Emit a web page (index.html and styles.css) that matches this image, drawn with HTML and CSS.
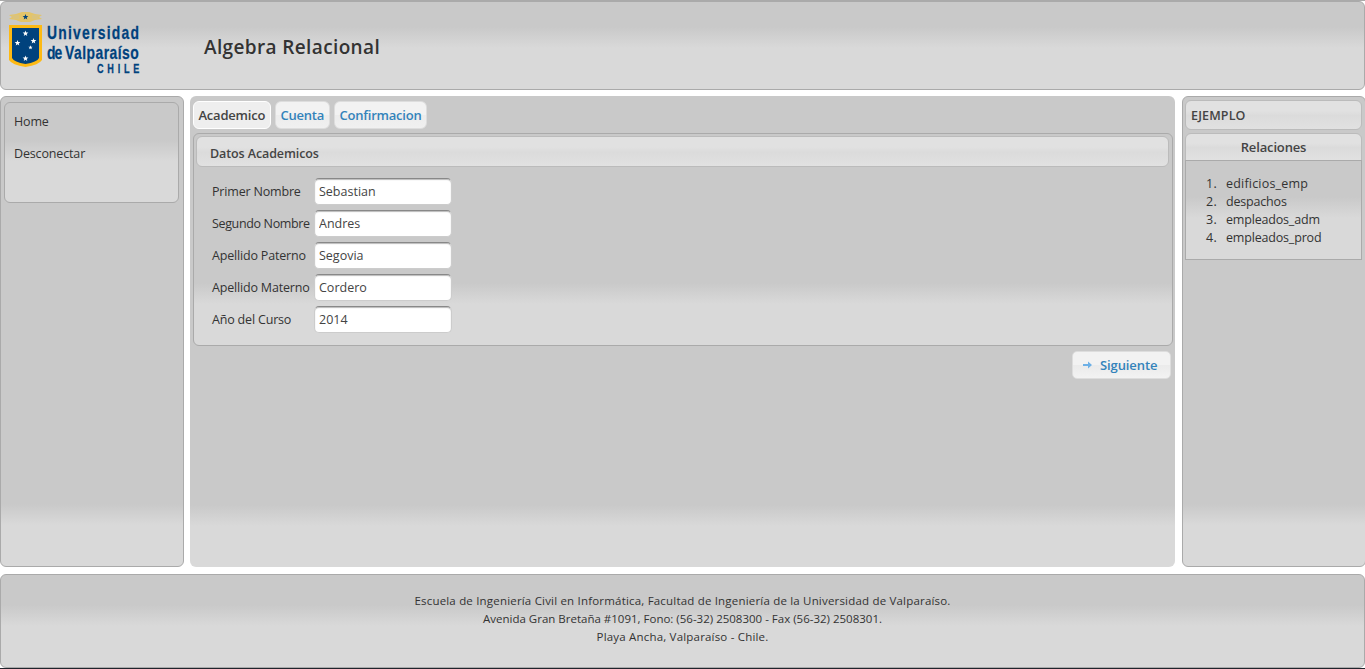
FILE: index.html
```html
<!DOCTYPE html>
<html lang="es">
<head>
<meta charset="utf-8">
<title>Algebra Relacional</title>
<link rel="stylesheet" href="styles.css">
</head>
<body>
<header class="panel header">
  <svg class="logo" width="136" height="66" viewBox="0 0 136 66" role="img" aria-label="Universidad de Valparaíso, Chile">
    <defs><path id="star" d="M0-3 .75-1 2.85-.93 1.2.4 1.76 2.43 0 1.25-1.76 2.43-1.2.4-2.85-.93-.75-1Z"/></defs>
    <path d="M1 3 8 2 14 0 21 0 27 2 34 3 31 5 34 7 27 8 22 10H13L8 8 1 7 4 5Z" fill="#e3c46a"/>
    <path d="M4 4 11 4M5 6 11 6M24 4 31 4M24 6 30 6" stroke="#c9c3a8" stroke-width=".6"/>
    <use href="#star" x="17.5" y="5" fill="#00427d"/>
    <path d="M1 13H34V48Q31 53 17.500 55Q4 53 1 48Z" fill="#fdb913"/>
    <path d="M4 16H31V46Q29 50 17.500 52Q6 50 4 46Z" fill="#00427d"/>
    <g fill="#fff"><use href="#star" x="17.500" y="21.500"/><use href="#star" x="9.500" y="31"/><use href="#star" x="25.500" y="29"/><use href="#star" transform="translate(22.500 35.500) scale(.75)"/><use href="#star" x="17.500" y="46.500"/></g>
    <g class="logo-text"><text transform="translate(39 27) scale(.73 1)" textLength="126">Universidad</text><text transform="translate(39 46.500) scale(.73 1)" textLength="21">de</text><text transform="translate(57 46.500) scale(.73 1)" textLength="101">Valparaíso</text><text class="logo-small" transform="translate(89 61) scale(.73 1)" textLength="58">CHILE</text></g>
  </svg>
  <h1 class="title">Algebra Relacional</h1>
</header>
<div class="columns">
  <aside class="panel side">
    <nav class="panel menu"><a>Home</a><a>Desconectar</a></nav>
  </aside>
  <main class="panel main">
    <ul class="tabs">
      <li class="tab tab-active">Academico</li>
      <li class="tab">Cuenta</li>
      <li class="tab">Confirmacion</li>
    </ul>
    <section class="panel data">
      <h2 class="bar data-title">Datos Academicos</h2>
      <form class="form">
        <label for="f1">Primer Nombre</label><input id="f1" value="Sebastian">
        <label class="tight" for="f2">Segundo Nombre</label><input id="f2" value="Andres">
        <label for="f3">Apellido Paterno</label><input id="f3" value="Segovia">
        <label for="f4">Apellido Materno</label><input id="f4" value="Cordero">
        <label for="f5">Año del Curso</label><input id="f5" value="2014">
      </form>
    </section>
    <button class="next" type="button"><svg width="9" height="8" viewBox="0 0 9 8"><path d="M0 3H5V0.500L9 4 5 7.500V5H0Z" fill="#6db0e6"/></svg><span>Siguiente</span></button>
  </main>
  <aside class="panel side side-right">
    <div class="bar example"><span>EJEMPLO</span></div>
    <h3 class="bar relations-title"><span>Relaciones</span></h3>
    <ol class="panel relations">
      <li><span>1.</span><span class="loose">edificios_emp</span></li>
      <li><span>2.</span><span>despachos</span></li>
      <li><span>3.</span><span>empleados_adm</span></li>
      <li><span>4.</span><span>empleados_prod</span></li>
    </ol>
  </aside>
</div>
<footer class="panel footer">
  <p class="spaced">Escuela de Ingeniería Civil en Informática, Facultad de Ingeniería de la Universidad de Valparaíso.</p>
  <p>Avenida Gran Bretaña #1091, Fono: (56-32) 2508300 - Fax (56-32) 2508301.</p>
  <p class="spaced">Playa Ancha, Valparaíso - Chile.</p>
</footer>
</body>
</html>
```
FILE: styles.css
```css
* { box-sizing: border-box; }
body {
  margin: 0; height: 669px; overflow: hidden; background: #fff;
  border-top: 1px solid #aaa; border-bottom: 1px solid #20242c;
  color: #333; font: 12.5px/18px "Trebuchet MS", "Open Sans", "Noto Sans", sans-serif;
  display: flex; flex-direction: column;
}
h1, h2, h3, p, ol, ul { margin: 0; padding: 0; list-style: none; }
.panel {
  border: 1px solid #aaa; border-radius: 6px;
  background: linear-gradient(to top, #d9d9d9 41px, #c9c9c9 62px);
}
.header { height: 89px; flex: none; display: flex; padding: 10px 0 0 7px; }
.logo { flex: none; }
.logo-text { font: bold 19px "Liberation Sans", Arial, sans-serif; fill: #00427d; stroke: #00427d; stroke-width: .25px; }
.logo-small { font-size: 12.5px; }
.title { margin: 23px 0 0 60px; font-size: 19px; line-height: 24px; font-weight: 600; letter-spacing: .37px; }
.columns { flex: none; height: 471px; margin-top: 6px; display: flex; width: 1366px; }
.side { width: 184px; flex: none; padding: 4px 4px 0 3px; }
.menu { height: 101px; margin-top: 1px; padding: 10px 9px; letter-spacing: -.15px; }
.menu a { display: block; height: 32px; }
.main { width: 985px; margin: 0 7px 0 6px; border: 0; padding: 5px 3px 0; }
.tabs { display: flex; gap: 4px; height: 28px; }
.tab {
  height: 28px; border: 1px solid #ddd; border-radius: 6px; padding: 0 4.5px;
  background: linear-gradient(#f2f2f2 50%, #ececec 51%, #f0f0f0);
  color: #3383bb; font-size: 13px; line-height: 27px; font-weight: 600; letter-spacing: -.22px; white-space: nowrap;
}
.tab:nth-child(1) { width: 78px; }
.tab:nth-child(2) { width: 55px; }
.tab:nth-child(3) { width: 93px; }
.tab-active { color: #444; border-color: #fff; background: #eee; }
.data { margin-top: 4px; height: 213px; padding: 2px 3px 2px 2px; width: 980px; }
.bar {
  border: 1px solid #bbb; border-radius: 6px; color: #444; font-weight: 600;
  background: linear-gradient(#e1e1e1 0 35%, #dbdbdb 52%, #e1e1e1);
}
.data-title { height: 31px; line-height: 33px; font-size: 12.5px; padding-left: 13px; letter-spacing: -.1px; }
.form { display: grid; grid-template-columns: 103px 138px; grid-auto-rows: 32px; padding: 8px 0 0 15px; align-items: center; }
.form label { white-space: nowrap; letter-spacing: -.18px; padding: 2px 0 0 1px; }
.form .tight { letter-spacing: -.35px; }
.form input {
  width: 138px; height: 27px; padding: 0 4px; border: 1px solid #ccc; border-radius: 5px;
  border-top-color: #888; background: #fff; color: #444; font: inherit; box-shadow: inset 0 1px 1px #bbb;
}
.next {
  display: flex; align-items: center; gap: 8px; margin: 5px 1px 0 auto; width: 99px; height: 28px; padding: 0 0 0 10px;
  border: 1px solid #ddd; border-radius: 5px; background: linear-gradient(#f2f2f2 50%, #ebebeb 51%, #f2f2f2);
  color: #3383bb; font: 600 13px/26px "Trebuchet MS", "Open Sans", sans-serif; letter-spacing: -.1px;
}
.side-right { padding: 3px 3px 0 2px; }
.example { height: 30px; line-height: 29px; padding-left: 5px; letter-spacing: .15px; }
.relations-title { margin-top: 3px; height: 28px; border-radius: 6px 6px 0 0; font-size: 13px; line-height: 27px; text-align: center; letter-spacing: -.15px; }
.relations { height: 100px; margin-top: -1px; border-radius: 0; padding: 14px 0 0 20px; }
.relations li { display: flex; letter-spacing: -.18px; }
.relations li .loose { letter-spacing: .2px; }
.relations li span:first-child { width: 20px; letter-spacing: .3px; }
.footer { flex: 1; margin-top: 7px; padding-top: 17px; font-size: 11.5px; text-align: center; }
.spaced { letter-spacing: .19px; }
```
